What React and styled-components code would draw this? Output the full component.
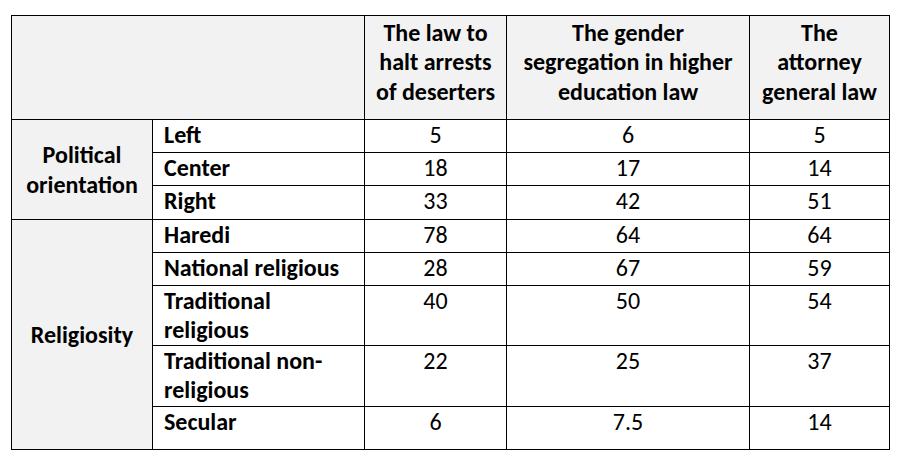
import React from 'react'
import styled, { createGlobalStyle } from 'styled-components'

const GlobalStyle = createGlobalStyle`
  html, body {
    margin: 0;
    padding: 0;
    background: #ffffff;
  }
  body {
    font-family: 'Carlito', 'Lato', sans-serif;
    color: #000000;
  }
`

const Wrapper = styled.div`
  padding: 15px 0 0 11px;
`

const Table = styled.table`
  border-collapse: collapse;
  table-layout: fixed;
  width: 879px;
  font-size: 24px;
  line-height: 29.3px;

  td,
  th {
    border: 1px solid #000000;
    padding: 0;
    vertical-align: top;
  }
`

const Col = styled.col`
  width: ${(p) => p.$w}px;
`

const Row = styled.tr`
  height: ${(p) => p.$h}px;
`

const HeadCell = styled.th`
  background: #f2f2f2;
  font-weight: 700;
  text-align: center;
  padding-top: 2px !important;
`

const GroupCell = styled.td`
  background: #f2f2f2;
  font-weight: 700;
  text-align: center;
  vertical-align: middle !important;
`

const LabelCell = styled.td`
  font-weight: 700;
  text-align: left;
  padding-left: 11px !important;
`

const ValueCell = styled.td`
  font-weight: 400;
  text-align: center;
`

const widths = [141, 212, 142, 243, 140]

const columns = [
  ['The law to', 'halt arrests', 'of deserters'],
  ['The gender', 'segregation in higher', 'education law'],
  ['The', 'attorney', 'general law'],
]

const groups = [
  {
    name: ['Political', 'orientation'],
    rows: [
      { label: 'Left', values: ['5', '6', '5'], h: 33 },
      { label: 'Center', values: ['18', '17', '14'], h: 33 },
      { label: 'Right', values: ['33', '42', '51'], h: 34 },
    ],
  },
  {
    name: ['Religiosity'],
    rows: [
      { label: 'Haredi', values: ['78', '64', '64'], h: 33 },
      { label: 'National religious', values: ['28', '67', '59'], h: 33 },
      { label: ['Traditional', 'religious'], values: ['40', '50', '54'], h: 59 },
      { label: ['Traditional non-', 'religious'], values: ['22', '25', '37'], h: 61 },
      { label: 'Secular', values: ['6', '7.5', '14'], h: 43 },
    ],
  },
]

const Lines = ({ text }) =>
  (Array.isArray(text) ? text : [text]).map((line, i) => (
    <React.Fragment key={i}>
      {i > 0 && <br />}
      {line}
    </React.Fragment>
  ))

export default function App() {
  return (
    <Wrapper>
      <GlobalStyle />
      <Table>
        <colgroup>
          {widths.map((w, i) => (
            <Col key={i} $w={w} />
          ))}
        </colgroup>
        <thead>
          <Row $h={104}>
            <HeadCell colSpan={2} />
            {columns.map((c, i) => (
              <HeadCell key={i}>
                <Lines text={c} />
              </HeadCell>
            ))}
          </Row>
        </thead>
        <tbody>
          {groups.map((g) =>
            g.rows.map((r, i) => (
              <Row key={g.name[0] + i} $h={r.h}>
                {i === 0 && (
                  <GroupCell rowSpan={g.rows.length}>
                    <Lines text={g.name} />
                  </GroupCell>
                )}
                <LabelCell>
                  <Lines text={r.label} />
                </LabelCell>
                {r.values.map((v, j) => (
                  <ValueCell key={j}>{v}</ValueCell>
                ))}
              </Row>
            ))
          )}
        </tbody>
      </Table>
    </Wrapper>
  )
}
